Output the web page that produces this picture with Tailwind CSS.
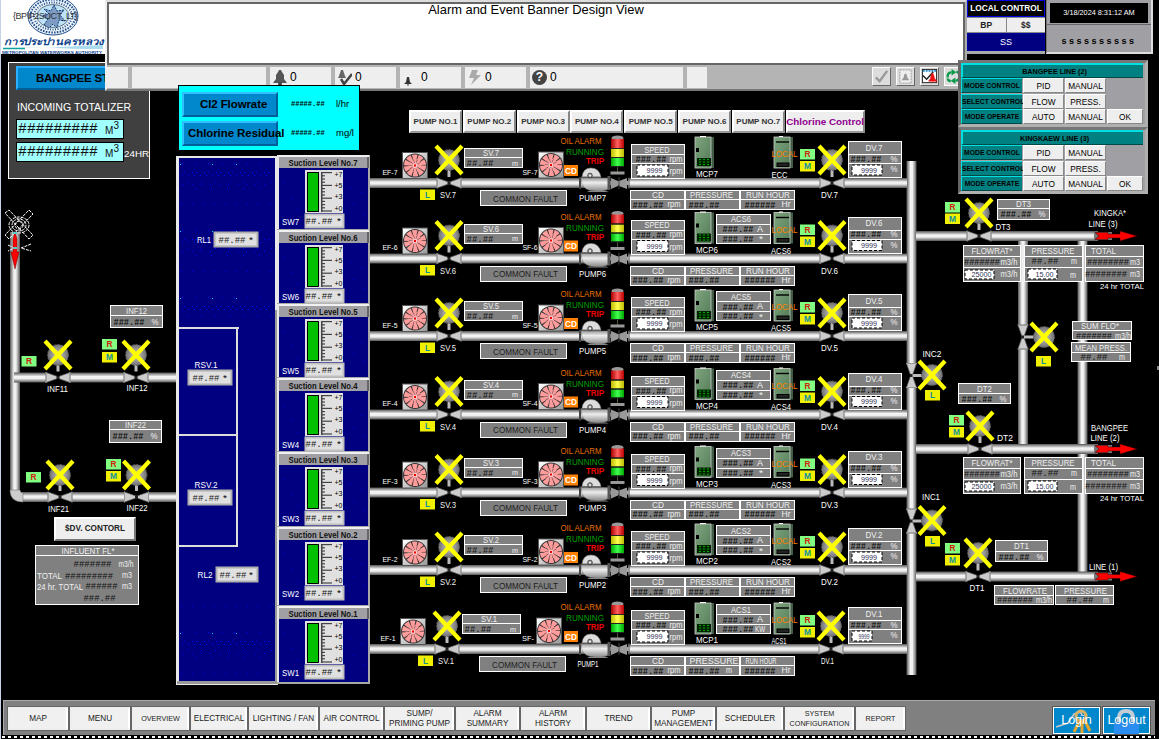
<!DOCTYPE html>
<html lang="en">
<head>
<meta charset="utf-8">
<title>Alarm and Event Banner Design View</title>
<script src="https://cdn.jsdelivr.net/npm/@tailwindcss/browser@4"></script>
</head>
<body class="relative w-[1159px] h-[739px] overflow-hidden bg-black font-['Liberation_Sans',sans-serif]">

<!-- Process diagram -->
<svg id="plant" class="absolute inset-0" width="1159" height="739" viewBox="0 0 1159 739">
  <defs>
    <linearGradient id="ph" x1="0" y1="0" x2="0" y2="1"><stop offset="0" stop-color="#555"/><stop offset=".4" stop-color="#f4f4f4"/><stop offset=".6" stop-color="#eee"/><stop offset="1" stop-color="#555"/></linearGradient>
    <linearGradient id="pv" x1="0" y1="0" x2="1" y2="0"><stop offset="0" stop-color="#555"/><stop offset=".4" stop-color="#f4f4f4"/><stop offset=".6" stop-color="#eee"/><stop offset="1" stop-color="#555"/></linearGradient>
    <linearGradient id="fanbg" x1="0" y1="0" x2="1" y2="1"><stop offset="0" stop-color="#fff"/><stop offset="1" stop-color="#999"/></linearGradient>
    <linearGradient id="cab" x1="0" y1="0" x2="1" y2="1"><stop offset="0" stop-color="#7fa57f"/><stop offset="1" stop-color="#517b55"/></linearGradient>
    <linearGradient id="pumpbody" x1="0" y1="0" x2="0" y2="1"><stop offset="0" stop-color="#999"/><stop offset=".35" stop-color="#eee"/><stop offset="1" stop-color="#888"/></linearGradient>
    <radialGradient id="mot"><stop offset="0" stop-color="#ccc"/><stop offset="1" stop-color="#707070"/></radialGradient>
    <linearGradient id="lr"><stop offset="0" stop-color="#a00"/><stop offset=".5" stop-color="#ff6060"/><stop offset="1" stop-color="#b00"/></linearGradient>
    <linearGradient id="ly"><stop offset="0" stop-color="#bb0"/><stop offset=".5" stop-color="#ffff50"/><stop offset="1" stop-color="#bb0"/></linearGradient>
    <linearGradient id="lg"><stop offset="0" stop-color="#0a0"/><stop offset=".5" stop-color="#40ff50"/><stop offset="1" stop-color="#0a0"/></linearGradient>
    <pattern id="water" width="97" height="67" patternUnits="userSpaceOnUse" x="179" y="160">
      <g fill="none" stroke="#0000ff">
        <path d="M3 3.500h90" stroke-dasharray="1 12"/><path d="M5 12.500h90" stroke-dasharray="1 7 1 3"/><path d="M3 15.500h90" stroke-dasharray="1 5"/>
        <path d="M8 21.500h88" stroke-dasharray="1 13"/><path d="M4 24.500h88" stroke-dasharray="1 8"/><path d="M16 28.500h80" stroke-dasharray="1 15"/><path d="M2 44.500h92" stroke-dasharray="1 10"/>
      </g>
      <g fill="#00e0f0"><path d="M1 4h1v1h-1zM33 4h1v1h-1zM57 4h1v1h-1z"/></g>
    </pattern>
    <g id="xvalve">
      <rect x="-8" y="-9" width="17" height="18" rx="3" fill="#777"/><circle r="10.5" fill="url(#mot)" stroke="#555" stroke-dasharray="2 1.5"/>
      <path d="M-13-14L13 14M13-14L-13 14" stroke="#ff0" stroke-width="4.2"/>
    </g>
    <g id="tie">
      <rect x="-12" y="-6" width="24" height="12" fill="#000"/>
      <path d="M-12-5L0-.8V.8L-12 5zM12-5L0-.8V.8L12 5z" fill="#ccc" stroke="#666" stroke-width=".7"/>
      <path d="M-12-5.500v11M12-5.500v11" stroke="#999"/><rect x="-1.500" y="-1.500" width="3" height="3" fill="#222"/>
    </g>
    <g id="fan">
      <rect width="26" height="27" fill="#555"/><rect x="1" y="1" width="24" height="25" fill="url(#fanbg)"/>
      <circle cx="13" cy="13.500" r="12" fill="#333"/>
      <g fill="none" stroke="#ff9c9c"><circle cx="13" cy="13.500" r="8.600" stroke-width="5" stroke-dasharray="4.500 .9"/><circle cx="13" cy="13.500" r="4.500" stroke-width="4.200" stroke-dasharray="2.400 .43"/></g>
      <circle cx="13" cy="13.500" r="2.600" fill="#ffc4c4"/><rect x="12" y="12.500" width="2" height="2" fill="#e00"/>
    </g>
    <g id="lamp">
      <ellipse cx="6.500" cy="2" rx="6" ry="2.500" fill="#999"/>
      <rect y="3" width="13" height="9" fill="url(#lr)"/><rect y="13" width="13" height="8" fill="url(#ly)"/><rect y="22" width="13" height="8" fill="url(#lg)"/>
      <path d="M0 12.500h13M0 21.500h13M0 30.500h13" stroke="#222"/><path d="M6.500 31v5" stroke="#553"/><rect x="-.5" y="35.500" width="14" height="3" fill="#999"/>
    </g>
    <g id="pump">
      <path d="M-1 9v12" stroke="#444" stroke-width="2"/>
      <path d="M0 10H20L28 10V21Q22 24 14 23Q4 23 1 16z" fill="url(#pumpbody)" stroke="#777" stroke-width=".5"/>
      <path d="M1 9Q2 0 10 0Q18 0 20 9z" fill="#ddd" stroke="#888" stroke-width=".6"/><path d="M0 9.200h20" stroke="#666"/><circle cx="9" cy="7.500" r="2.300" fill="#999" stroke="#333" stroke-width=".8"/><circle cx="9" cy="7.500" r=".9" fill="#fff"/>
      <path d="M8 23h17l3 1H6z" fill="#888"/>
      <path d="M26.500 8h3v14h-3z" fill="#555"/><path d="M30 10l7 3v5l-7 3zM46 10l-8 3v5l8 3z" fill="#999"/><path d="M38 9v12M48 9v12" stroke="#444"/>
    </g>
    <g id="cabA">
      <rect y="1" width="19" height="31" fill="#425c46"/><rect x="0" y="1" width="16" height="31" fill="url(#cab)" stroke="#ccc" stroke-width=".8"/><path d="M5 .5h6" stroke="#fff"/>
      <rect x="1" y="12" width="3" height="4"/><rect x="2" y="22" width="14" height="8" fill="#020"/><path d="M4 23.500h10M4 26h10M4 28.500h10" stroke="#0a0" stroke-dasharray="2 2"/>
    </g>
    <g id="cabB">
      <rect y="1" width="19" height="31" fill="#425c46"/><rect x="0" y="1" width="16" height="31" fill="url(#cab)" stroke="#ccc" stroke-width=".8"/>
      <path d="M5 .5h4" stroke="#fff"/><path d="M2 6h13" stroke="#000" stroke-width="1.400"/><rect x="3" y="27" width="12" height="3.500" fill="#222" stroke="#000"/>
    </g>
    <g id="arrow"><path d="M-18-4H0V4h-18z" fill="#777"/><path d="M-17-3.500H-4V-2H8V-5L25 0 8 5V2H-4V3.500h-13l4-3.500z" fill="red" stroke="#300" stroke-width=".5"/></g>
  </defs>
</svg>

<!-- Station totalizer -->
<section class="absolute left-[8px] top-[62px] w-[142px] h-[117px] border border-white bg-[#404040] text-white">
  <div class="ml-[7px] mt-[3px] w-[120px] h-[24px] border-2 border-t-[#2ab0ff] border-l-[#2ab0ff] border-b-[#005f99] border-r-[#005f99] bg-[#0087cc] pl-[18px] text-[11.500px]/[21px] font-bold text-black whitespace-nowrap tracking-[-0.200px]">BANGPEE STA</div>
  <div class="ml-[8px] mt-[10px] text-[10.600px]/[15px] whitespace-nowrap"><span>INCOMING TOTALIZER</span></div>
  <div class="ml-[7px] mt-[4px] flex w-[108px] h-[20px] justify-between border border-black bg-[#a0ffff] px-px text-[#111]"><b class="font-['Liberation_Mono'] text-[14.800px]/[19px] font-normal">#########</b><span class="pr-[3px] text-[10px]/[22px]">M<sup class="text-[10px]">3</sup></span></div>
  <div class="ml-[7px] mt-[3px] flex w-[140px] h-[20px]"><div class="flex w-[108px] shrink-0 justify-between border border-black bg-[#a0ffff] px-px text-[#111]"><b class="font-['Liberation_Mono'] text-[14.800px]/[19px] font-normal">#########</b><span class="pr-[3px] text-[10px]/[22px]">M<sup class="text-[10px]">3</sup></span></div><span class="text-[9.800px]/[24px]">24HR</span></div>
</section>

<!-- Waterworks logo -->
<div class="absolute left-0 top-0 w-[105px] h-[54px] bg-white border-l border-[#c6d4e8]">
  <svg width="104" height="54" viewBox="0 0 104 54">
    <ellipse cx="52" cy="16" rx="25" ry="19" fill="#e8f3fa" stroke="#234c88" stroke-width="1"/>
    <ellipse cx="52" cy="16" rx="22.500" ry="16.500" fill="none" stroke="#234c88" stroke-width="2" stroke-dasharray="1.500 1.300"/>
    <ellipse cx="52" cy="16" rx="19" ry="13.500" fill="none" stroke="#234c88" stroke-width="2" stroke-dasharray="1 1.500"/>
    <ellipse cx="52" cy="16" rx="16" ry="11.500" fill="#bfe3f6" stroke="#456" stroke-width=".8"/>
    <path d="M43 25l4-6-6-3 7-2-5-5 7 2 3-6 3 6 7-1-4 5 5 6-6-1-2 8-4-4-4 4z" fill="#7e9cc4" stroke="#123c77" stroke-width="1" stroke-dasharray="2 1"/>
    <text x="12" y="19" font-size="9" fill="#333" textLength="65">{BP\P2SUCT_LT}</text>
    <text x="3" y="44.500" font-size="10" font-weight="bold" font-style="italic" fill="#10448c" textLength="100" lengthAdjust="spacingAndGlyphs">การประปานครหลวง</text>
    <path d="M2 48h34l66-3v4q-34 0-52-1.500z" fill="#a9dcee"/><path d="M2 48.500h22" stroke="#10a0a0" stroke-width="1.500"/>
    <text x="1" y="53.500" font-size="4" font-weight="bold" fill="#10448c" textLength="100" lengthAdjust="spacingAndGlyphs">METROPOLITAN WATERWORKS AUTHORITY</text>
  </svg>
</div>

<!-- Alarm banner -->
<section class="absolute left-[105px] top-0 flex flex-col w-[862px] h-[91px] border-2 border-[#777] border-l-[#eee] border-r-[#aaa] border-t-[#ddd] bg-[#b4b4b4]">
  <div class="h-[63px] border-2 border-[#666] bg-white text-center text-[12.900px]/[12px] text-black"><span>Alarm and Event Banner Design View</span></div>
  <div class="mt-[2px] flex h-[21px] gap-[4px] text-[12px]/[21px] text-black">
    <div class="w-[21px] bg-[#eee]"></div><div class="w-[134px] bg-[#eee]"></div>
    <div class="flex w-[61px] items-center gap-[3px] bg-[#eee] pl-[3px]"><svg width="14" height="16" viewBox="0 0 14 16"><path d="M6 0h2l1 2 2 3v4l3 4H0l3-4V5l2-3z" fill="#555"/><circle cx="7" cy="14" r="2" fill="#444"/></svg>0</div>
    <div class="flex w-[61px] items-center gap-[3px] bg-[#eee] pl-[3px]"><svg width="14" height="16" viewBox="0 0 14 16"><path d="M3 0h2l2 6 1 2H0l1-2z" fill="#666"/><path d="M3 9l3 5 8-10" fill="none" stroke="#444" stroke-width="2.500"/></svg>0</div>
    <div class="flex w-[61px] items-center gap-[9px] bg-[#eee] pl-[4px]"><svg width="8" height="16" viewBox="0 0 8 16"><path d="M3 7h2l1 5 2 2H0l2-2z" fill="#333"/><path d="M3 15h2" stroke="#333"/></svg>0</div>
    <div class="flex w-[61px] items-center gap-[4px] bg-[#eee] pl-[4px]"><svg width="12" height="15" viewBox="0 0 12 15"><path d="M3 0h6L7 5h5L2 15l3-7H0z" fill="#aaa"/></svg>0</div>
    <div class="flex w-[153px] items-center gap-[3px] bg-[#eee] pl-[2px]"><span class="grid size-[15px] place-items-center rounded-full bg-[#444] text-[12px]/[15px] font-bold text-white">?</span>0</div>
    <div class="w-[20px] bg-[#eee]"></div>
    <div class="ml-[161px] flex gap-[5px]">
      <div class="size-[19px] border border-white border-r-[#666] border-b-[#666] bg-[#ddd]"><svg viewBox="0 0 18 18"><path d="M3 10l4 4 8-11" fill="none" stroke="#999" stroke-width="2.500"/></svg></div>
      <div class="size-[19px] border border-white border-r-[#666] border-b-[#666] bg-[#ddd]"><svg viewBox="0 0 18 18"><rect x="3" y="2" width="12" height="14" fill="#eee" stroke="#999" stroke-dasharray="2 1"/><path d="M8 6h2l1 4 2 3H5l2-3z" fill="#999"/></svg></div>
      <div class="size-[19px] border border-white border-r-[#666] border-b-[#666] bg-[#ddd]"><svg viewBox="0 0 18 18"><rect x="1.500" y="1.500" width="15" height="14" fill="#fff" stroke="#222"/><path d="M2 3h14" stroke="#28c" stroke-width="2" stroke-dasharray="2 1"/><path d="M2 8l4 4 7-8" fill="none" stroke="#222" stroke-width="1.500"/><path d="M11 6h2l1.500 5 2.500 3H8l2-3zM11 15h3" fill="#e11" stroke="#e11" stroke-width=".5"/></svg></div>
      <div class="size-[19px] border border-white bg-[#ddd]"><svg viewBox="0 0 18 18"><path d="M3 10Q2 5 7 4.500M15 8q1 5-4 5.500M12 4q3 .5 3 3M6 14q-3-.5-3-3" fill="none" stroke="#0a9a4a" stroke-width="2.500"/><path d="M7 1l5 3.500-5 3.500zM11 10v7l-5-3.500z" fill="#0a9a4a"/></svg></div>
    </div>
  </div>
</section>

<!-- Chlorine block -->
<section class="absolute left-[178px] top-[85px] flex w-[182px] h-[66px] flex-col gap-[4px] border border-black bg-[#0ff] px-[3px] pt-[6px] text-[11.500px] text-black">
  <div class="flex h-[25px] items-center"><div class="w-[96px] h-[25px] shrink-0 border-2 border-t-[#30c0ff] border-l-[#30c0ff] border-b-[#005f99] border-r-[#005f99] bg-[#0087cc] pl-[16px] leading-[21px] font-bold whitespace-nowrap tracking-[-0.100px]">Cl2 Flowrate</div><span class="ml-[13px] w-[45px] font-['Liberation_Mono'] text-[7px] font-bold">#####.##</span><span class="text-[9.500px]">l/hr</span></div>
  <div class="flex h-[25px] items-center"><div class="w-[96px] h-[25px] shrink-0 border-2 border-t-[#30c0ff] border-l-[#30c0ff] border-b-[#005f99] border-r-[#005f99] bg-[#0087cc] pl-[4px] leading-[21px] font-bold whitespace-nowrap tracking-[-0.080px]">Chlorine Residual</div><span class="ml-[13px] w-[45px] font-['Liberation_Mono'] text-[7px] font-bold">#####.##</span><span class="text-[9.500px]">mg/l</span></div>
</section>

<!-- Pump tabs -->
<nav class="absolute left-[409px] top-[110px] flex h-[23px] w-[456px] text-[8px] font-bold text-[#333]" id="tabs"></nav>

<!-- Local control -->
<section class="absolute left-[967px] top-0 flex h-[54px] w-[78px] flex-col bg-[#888] text-center font-bold">
  <div class="h-[17px] border border-[#0000e0] bg-black text-[8.300px]/[15px] text-white whitespace-nowrap">LOCAL CONTROL</div>
  <div class="flex h-[16px] gap-px py-px text-[8.500px]/[14px] text-[#222]"><div class="flex-1 bg-[#eee]">BP</div><div class="flex-1 bg-[#eee]">$$</div></div>
  <div class="h-[18px] border border-[#0000a0] bg-[#000080] text-[9px]/[17px] font-normal text-white">SS</div>
  <div class="flex-1 bg-[#aaa]"></div>
</section>
<section class="absolute left-[1046px] top-0 flex h-[54px] w-[107px] flex-col border-r-2 border-b-2 border-r-[#ddd] border-b-[#ddd] border-l border-l-[#777] bg-[#a0a0a4] text-center">
  <div class="mx-[3px] mt-[3px] h-[20px] bg-black text-[7.300px]/[20px] text-white whitespace-nowrap">3/18/2024 8:31:12 AM</div>
  <div class="mt-px h-[2px] border-t border-[#666] bg-[#ccc]"></div>
  <div class="flex-1 pt-[1px] text-[9px]/[30px] font-bold tracking-[2.500px] text-black whitespace-nowrap">ssssssssss</div>
</section>

<!-- Line controllers -->
<section id="lines" class="absolute left-[958px] top-[60px] w-[190px] text-black"></section>

<!-- SDV button -->
<button class="absolute left-[54px] top-[517px] h-[24px] w-[82px] border-2 border-t-white border-l-white border-r-[#777] border-b-[#777] bg-[#eee] text-[8.200px] text-[#222] font-bold whitespace-nowrap">$DV. CONTORL</button>

<!-- Navigation -->
<nav class="absolute left-[3px] top-[700px] flex h-[35px] w-[1152px] justify-between border-t border-l border-[#aaa] bg-[#808080] pl-[4px] pr-[5px] pt-[6px]">
  <div id="nav" class="flex h-[23px] gap-[2px] text-center text-[8.200px]/[10px] text-[#222]"></div>
  <div class="flex h-[27px] gap-[3px] text-white text-[12.500px]">
    <div class="relative grid w-[47px] place-items-center border border-white outline outline-[#555] bg-[#0087cc]"><svg class="absolute inset-0" width="45" height="26" viewBox="0 0 45 26"><path d="M2 19l12-4 6-9q8-4 8 2" fill="none" stroke="#ccc" stroke-width="1.500"/><circle cx="27" cy="8" r="5" fill="none" stroke="#ddb260" stroke-width="3"/><path d="M26 12l-6 12M30 11l6 12M28 12v13" stroke="#e0a530" stroke-width="3"/></svg><span class="relative">Login</span></div>
    <div class="relative grid w-[47px] place-items-center border border-white outline outline-[#555] bg-[#0087cc]"><svg class="absolute inset-0" width="45" height="26" viewBox="0 0 45 26"><path d="M15 14V10q0-7 7-7t7 7v4" fill="none" stroke="#c4ccd4" stroke-width="4"/><rect x="10" y="14" width="25" height="12" fill="#2b8df0"/></svg><span class="relative">Logout</span></div>
  </div>
</nav>
<div class="absolute left-0 top-0 h-[739px] w-px bg-[#c6d4e8]"></div>
<div class="absolute left-[2px] top-[736px] h-[2px] w-[1153px] bg-[repeating-linear-gradient(90deg,#fff_0_3px,#000_3px_6px)]"></div>
<div class="absolute left-[1157px] top-[366px] h-[4px] w-[2px] bg-[#888]"></div>

<script>
const out = [];
const add = s => out.push(s);
const rect = (x, y, w, h, cls) => add(`<rect x="${x}" y="${y}" width="${w}" height="${h}" class="${cls}"/>`);
// Text centred on (x, y), fitted to width w
const txt = (x, y, s, w, size, cls) => add(`<text x="${x - w / 2}" y="${y + size * .36}" font-size="${size}" textLength="${w}" lengthAdjust="spacingAndGlyphs" class="${cls}">${s}</text>`);
const hash = (x, y, s, w, cls) => txt(x, y, s, w, 9, cls || "font-bold font-['Liberation_Mono'] fill-[#101010]");
const white = 'fill-white', soft = 'fill-[#f0f0f0]';
const use = (id, x, y, t) => add(`<use href="#${id}" transform="translate(${x} ${y}) ${t || ''}"/>`);
const pipeH = (x1, x2, y) => add(`<rect x="${x1}" y="${y - 5}" width="${x2 - x1}" height="10" fill="url(#ph)"/>`);
const pipeV = (x, y1, y2) => add(`<rect x="${x - 5}" y="${y1}" width="10" height="${y2 - y1}" fill="url(#pv)"/>`);
// Grey framed table with horizontal rules
const table = (x, y, w, h, rules) => { y = Math.round(y); rect(x + .5, y + .5, w - 1, h - 1, 'fill-[#808080] stroke-white'); rules.forEach(r => rect(x, Math.round(r), w, 1, 'fill-white')); };
const field = (x, y, w, h, s, tw) => { rect(x, y, w, h, 'fill-white'); rect(x, y, w, h, 'fill-none stroke-black [stroke-dasharray:3_2]'); txt(x + w / 2 + 2, y + h / 2, s, tw, 8, 'fill-[#335]'); };
const tag = (x, y, s) => {
  if (s === 'R') rect(x, y, 15, 10.500, 'fill-[#80ff80]'); else rect(x, y, 15, 10.500, 'fill-[#f0f000]');
  if (s === 'R') txt(x + 7.5, y + 5.3, s, 6, 8.5, 'font-bold fill-[#d02010]'); else txt(x + 7.5, y + 5.3, s, s === 'M' ? 7 : 5, 8.5, 'font-bold fill-[#1090a0]');
};
const valve = (x, pipeY, headY) => { rect(x - 1.5, headY + 10, 3, pipeY - headY - 10, 'fill-[#bbb]'); use('tie', x, pipeY); use('xvalve', x, headY); };
const pct = (x, y, w, h, name, split) => { table(x, y, w, h, [split]); txt(x + w / 2, (y + split) / 2 + .5, name, name === 'INF12' || name === 'INF22' ? 21 : 15, 8.5, soft); hash(x + 19, (split + y + h) / 2, '###.##', 31); txt(x + w - 8, (split + y + h) / 2, '%', 7, 9, soft); };

// Water tank
rect(176, 156, 102, 529, 'fill-[#e8e8e8]'); rect(177, 681, 101, 3, 'fill-[#999]');
rect(179, 158, 96, 523, 'fill-[#000080]');
add('<rect x="179" y="158" width="96" height="160" fill="url(#water)"/><rect x="179" y="596" width="96" height="85" fill="url(#water)"/>');
rect(275, 310, 2, 372, 'fill-[#999]');
rect(179, 327, 60, 2, 'fill-[#ddd]'); rect(236, 329, 2, 217, 'fill-[#ddd]'); rect(179, 434, 59, 2, 'fill-[#ddd]'); rect(179, 545, 59, 2, 'fill-[#ddd]');
const tankBox = (x, y, w) => { rect(x + .5, y + .5, w - 1, 14, 'fill-[#e0e0e0] stroke-[#b0b0b0] [stroke-width:2]'); hash(x + w / 2 - 4, y + 8, '##.##', 27, "font-['Liberation_Mono'] fill-[#222]"); txt(x + w - 7, y + 8, '*', 4, 9, 'fill-black'); };
txt(204, 240, 'RL1', 14, 9, white); tankBox(214, 232, 44);
txt(206, 365, 'RSV.1', 23, 9, white); tankBox(188, 370, 44);
txt(206, 485, 'RSV.2', 23, 9, white); tankBox(188, 490, 44);
txt(205, 575, 'RL2', 15, 9, white); tankBox(216, 567, 42);

// Suction levels
rect(277, 155, 93, 529, 'fill-[#a8a8a8]');
[[7, 162], [6, 237], [5, 311], [4, 385], [3, 459], [2, 534], [1, 613]].forEach(([n, y], i, all) => {
  const end = i < 6 ? all[i + 1][1] - 8 : 682;
  rect(278, y - 7, 91, 2, 'fill-[#f0f0f0]'); rect(279, y - 5, 90, 11, 'fill-[#a0a0a4]'); rect(367, y - 5, 2, 11, 'fill-[#666]');
  rect(279, y + 6, 89, end - y - 6, 'fill-[#000080]'); rect(277, y - 7, 2, end - y + 7, 'fill-[#e8e8e8]');
  txt(323, y + .3, 'Suction Level No.' + n, 69, 9, 'font-bold fill-[#111]');
  [[283, 20], [291, 35], [298, 47], [350, 25], [354, 42], [361, 30], [364, 51]].forEach(p => rect(p[0], y + p[1], 1, 1, 'fill-[#0000e8]'));
  rect(305, y + 8, 38, 43, 'fill-[#e0e0e0]'); rect(307.5, y + 10.5, 11, 39, 'fill-[#00c000] stroke-black');
  rect(321, y + 10, 1.5, 40, 'fill-[#444]');
  for (let k = 0; k <= 12; k++) rect(321, y + 10 + k * 3.2, k % 4 === 0 ? 11 : 4, 1.2, 'fill-[#444]');
  ['+7', '+5', '+3', '+0'].forEach((t, k) => txt(338.500, y + 12.500 + k * 11.2, t, 8, 7, 'fill-black'));
  rect(305.5, y + 52.5, 38, 13, 'fill-[#e0e0e0] stroke-[#c0c0c0] [stroke-width:2]');
  hash(319, y + 59, '##.##', 27, "font-['Liberation_Mono'] fill-[#111]"); txt(339, y + 59, '*', 4, 9, 'fill-black');
  txt(290.500, y + 60, 'SW' + n, 17, 9, white);
});

// Common headers and intake line
pipeV(15, 232, 492); pipeH(14, 176, 377.5); pipeH(20, 176, 497);
add('<path d="M10 490h10q0 3 3 3v9q-13 0-13-12z" fill="#ccc" stroke="#777" stroke-width=".6"/>');
pipeV(911.5, 161, 675); pipeV(1023, 240, 445); pipeV(1082.5, 240, 574);

// Pump trains
[[7, 183, 0], [6, 258.5, 0], [5, 336, 0], [4, 414.5, 0], [3, 492.5, 0], [2, 570, 0], [1, 649, -2]].forEach(([n, y, d]) => {
  pipeH(370, 907, y);
  use('fan', 402 + d, y - 31); use('fan', 538 + d, y - 31.5);
  txt(390 + d, y - 11, 'EF-' + n, 15, 7.5, white); txt(530 + d, y - 11, n === 1 ? 'SF-' : 'SF-' + n, n === 1 ? 12 : 15, 7.5, white);
  valve(449 + d, y, y - 23); tag(420 + d, y + 6.5, 'L'); txt(448 + d, y + 12, 'SV.' + n, 16, 8.5, soft);
  table(464 + d, y - 35, 59, 20, [y - 26]); txt(491 + d, y - 30, 'SV.' + n, 16, 8.5, soft); hash(480 + d, y - 20, '##.##', 27, "font-bold font-['Liberation_Mono'] fill-[#222]"); txt(515 + d, y - 20, 'm', 6, 8, soft);
  rect(480.5 + d / 2, Math.round(y) + 7.5, 86, 15, 'fill-[#808080] stroke-white'); txt(525.500 + d / 2, y + 15.2, 'COMMON FAULT', 65, 9.5, 'fill-[#202020]');
  rect(564, y - 18, 14, 11, 'fill-[#ff8000]'); txt(571, y - 12.5, 'CD', 12, 9, 'font-bold fill-white');
  txt(581, y - 42, 'OIL ALARM', 41, 9, 'fill-[#e87000]'); txt(585, y - 31, 'RUNNING', 38, 9, 'fill-[#00a000]'); txt(595, y - 22, 'TRIP', 18, 9, 'font-bold fill-[#f00000]');
  use('lamp', 611, y - 47); rect(604, y - 6, 24, 12, 'fill-black'); rect(604, y - 2, 24, 4, 'fill-[#aaa]'); use('pump', 581, y - 15);
  txt(n === 1 ? 588 : 592.5, y + 15, 'PUMP' + n, n === 1 ? 21 : 27, 9, white);
  // Speed
  table(631, y - 39, 54, 35, [y - 29, y - 20]); txt(657, y - 33.500, 'SPEED', 25, 8.5, soft); hash(651, y - 24, '###.##', 31); txt(676, y - 24.500, 'rpm', 13, 8.5, soft);
  field(637, y - 18, 31, 11, '9999', 16); txt(676, y - 12, 'rpm', 13, 8.5, soft);
  // CD, pressure, run hour
  table(630, y + 7, 55, 20, [y + 16]); table(685, y + 7, 55, 20, [y + 16]); table(740, y + 7, 55, 20, [y + 16]);
  txt(658, y + 12, 'CD', 12, 8.5, soft); txt(n === 1 ? 714 : 711.5, y + 12, 'PRESSURE', n === 1 ? 49 : 43, n === 1 ? 9.5 : 8.5, soft); txt(n === 1 ? 761 : 768, y + 12, 'RUN HOUR', n === 1 ? 31 : 44, 8.5, soft);
  hash(648, y + 21.5, '###.##', 31); txt(674, y + 21, 'rpm', 13, 8.5, soft); hash(704, y + 21.5, '###.##', 31); if (n === 1) txt(729, y + 21, 'm', 6, 8.5, soft);
  hash(760, y + 21.5, '######', 31); txt(786, y + 21, 'Hr', 9, 8.5, soft);
  // Cabinets
  use('cabA', 695, y - 47); use('cabB', 774, y - 47); txt(707, y - 9, 'MCP' + n, 22, 9, white);
  txt(n === 1 ? 779 : n === 7 ? 779.5 : 781, y - 8, n === 7 ? 'ECC' : 'ACS' + n, n === 7 ? 16 : n === 1 ? 15 : 20, 9, white);
  if (n < 7) {
    table(716, y - 45, 55, 30, [y - 35, y - 25]); txt(741, y - 39.5, 'ACS' + n, 20, 8.5, soft);
    hash(738, y - 29.5, '###.##', 31); hash(738, y - 20, '###.##', 31); txt(760, y - 30, 'A', 6, 8.5, soft); n === 1 ? txt(760, y - 20, 'KW', 10, 8.5, soft) : txt(761, y - 19.5, '*', 4, 9, soft);
  }
  txt(784.5, y - 29, 'LOCAL', 26, 8.5, 'fill-[#ff8000]');
  tag(800, y - 34, 'R'); tag(800, y - 22, 'M'); valve(832 + d / 2, y, y - 23); txt(829.500 - (n === 1 ? 2 : 0), y + 12, 'DV.' + n, n === 1 ? 13 : 17, 8.5, white);
  table(848, y - 42, 54, 37, [y - 29, y - 20]); txt(874, y - 35.5, 'DV.' + n, 17, 9, soft); hash(866, y - 24.5, '###.##', 31); txt(894, y - 24.500, '%', 7, 9, soft);
  field(852, y - 18, n === 1 ? 20 : 30, 10, '9999', n === 1 ? 11 : 16); txt(894, y - 14, '%', 7, 9, soft);
});

// Delivery lines
const delivery = (y, vx, hy) => { pipeH(916, 1098, y); use('arrow', 1112, y); valve(vx, y, hy); };
delivery(236, 979, 213); delivery(449, 980, 426); delivery(576.5, 978, 553);
tag(945, 202, 'R'); tag(945, 213.5, 'M'); pct(997, 199, 53, 21, 'DT3', 208); txt(1003, 227, 'DT3', 15, 8.5, white);
tag(949, 415, 'R'); tag(949, 427, 'M'); pct(958, 383, 53, 21, 'DT2', 393); txt(1005, 438, 'DT2', 16, 8.5, white);
tag(945, 543, 'R'); tag(945, 555, 'M'); pct(995, 540, 53, 22, 'DT1', 551); txt(977, 588, 'DT1', 15, 8.5, white);
txt(1110, 213, 'KINGKA*', 32, 8.5, white); txt(1103, 223.500, 'LINE (3)', 29, 8.5, white);
txt(1109.500, 428, 'BANGPEE', 37, 8.5, white); txt(1105, 437.500, 'LINE (2)', 29, 8.5, white); txt(1103.500, 566.5, 'LINE (1)', 29, 8.5, white);
[245, 457].forEach(y => {
  table(963, y, 58, 37, [y + 11, y + 22]); table(1024, y, 59, 37, [y + 11, y + 22]); table(1085, y, 59, 37, [y + 11, y + 22]);
  txt(992, y + 6, 'FLOWRAT*', 41, 8.5, soft); txt(1053, y + 5.5, 'PRESSURE', 43, 8.5, soft); txt(1103.5, y + 6, 'TOTAL', 25, 8.5, soft);
  const dark = "font-['Liberation_Mono'] fill-[#111]";
  hash(982, y + 17, '#######', 36, dark); txt(1009, y + 17, 'm3/h', 17, 8.5, soft); hash(1045, y + 16, '##.##', 27, dark); txt(1074, y + 16, 'm', 6, 8.5, soft);
  hash(1108, y + 17, '########', 42, dark); txt(1135, y + 17, 'm3', 10, 8.5, soft); hash(1106, y + 29, '########', 42, dark); txt(1135, y + 29, 'm3', 10, 8.5, soft);
  field(965, y + 25, 29, 9, '25000', 20); txt(1009, y + 29, 'm3/h', 17, 8.5, soft); field(1028, y + 24, 29, 10, '15.00', 18); txt(1073, y + 30, 'm', 6, 8.5, soft);
  txt(1122, y + 41.5, '24 hr TOTAL', 44, 8, white);
});
const m7 = "font-['Liberation_Mono'] fill-[#111]";
table(1072, 321, 60, 19, [330]); txt(1100, 326, 'SUM FLO*', 38, 8.5, soft); hash(1094, 335.5, '#######', 36, m7); txt(1123, 335.5, 'm3/h', 16, 8.5, soft);
table(1071, 342, 60, 20, [352]); txt(1101, 347.5, 'MEAN PRESS.', 52, 8.5, soft); hash(1094, 357, '##.##', 27, m7); txt(1122, 357, 'm', 6, 8.5, soft);
table(994, 585, 60, 20, [595]); txt(1025, 590.5, 'FLOWRATE', 44, 8.5, soft); hash(1015, 600, '#######', 36, m7); txt(1044, 600, 'm3/h', 16, 8.5, soft);
table(1055, 585, 59, 20, [595]); txt(1085.500, 590.5, 'PRESSURE', 43, 8.5, soft); hash(1080, 600, '##.##', 27, m7); txt(1106, 600, 'm', 6, 8.5, soft);
[[1023, 337, 1044, 337], [911.5, 375.5, 932, 375], [911.5, 521, 932, 520.5]].forEach(([x, y, hx, hy]) => { use('tie', x, y, 'rotate(90)'); rect(x + 1, y - 1.5, hx - x - 8, 3, 'fill-[#bbb]'); use('xvalve', hx, hy); });
tag(1036, 356, 'L'); tag(925, 390, 'L'); tag(925, 536, 'L'); txt(932, 354, 'INC2', 19, 8.5, white); txt(931, 497, 'INC1', 18, 8.5, white);

// Influent side
valve(58, 377.5, 355); valve(136, 377.5, 355); valve(60, 497, 475); valve(136.5, 497, 475);
tag(21.5, 356, 'R'); tag(102, 339, 'R'); tag(102, 352, 'M'); tag(26, 472, 'R'); tag(106, 459, 'R'); tag(106, 471, 'M');
txt(57.5, 389, 'INF11', 21, 8.5, white); txt(137, 388, 'INF12', 21, 8.5, white); txt(58.5, 509, 'INF21', 21, 8.5, white); txt(137, 508, 'INF22', 21, 8.5, white);
pct(110, 305, 53, 23, 'INF12', 315); pct(109, 420, 53, 23, 'INF22', 429);
table(35, 545, 104, 60, [555]); txt(88, 550.5, 'INFLUENT FL*', 53, 8.5, soft);
hash(92.500, 564, '#######', 38, m7); txt(126, 563.500, 'm3/h', 15, 8.5, soft);
txt(49.500, 575.500, 'TOTAL', 25, 8.5, soft); hash(89, 575.500, '#########', 48, m7); txt(127, 574.500, 'm3', 10, 8.5, soft);
txt(60, 586.500, '24 hr. TOTAL', 46, 8.5, soft); hash(101.500, 585.500, '######', 32, m7); txt(127, 585.500, 'm3', 10, 8.5, soft); hash(99.500, 597.500, '###.##', 32, m7);
add(`<g fill="none" stroke="#fff" stroke-dasharray="3 1"><path d="M5 213l4-3 24 25-4 4zM29 210l4 4-24 25-4-4z"/><ellipse cx="19" cy="225" rx="10" ry="8"/><ellipse cx="19" cy="225" rx="7" ry="6"/><ellipse cx="19" cy="225" rx="4" ry="4"/><path d="M8 245l6 3-6 3M31 244l-10 4 10 3"/></g>
<path d="M15 231l2 8v13h2l-4 17-4-17h2v-13z" fill="red" stroke="#600" stroke-width=".5"/><path d="M13 233h4M13 248h4" stroke="#5cc" stroke-width="2"/>`);

document.getElementById('plant').insertAdjacentHTML('beforeend', out.join(''));

// Pump tabs
document.getElementById('tabs').innerHTML = [1, 2, 3, 4, 5, 6, 7].map(n => `<div class="w-[53px] mr-[0.800px] shrink-0 border-2 border-t-white border-l-white border-r-[#888] border-b-[#999] bg-[#eee] text-center leading-[20px] whitespace-nowrap"><span>PUMP NO.${n}</span></div>`).join('') +
  '<div class="flex w-[79px] shrink-0 justify-center border-2 border-t-white border-l-white border-r-[#888] border-b-[#999] bg-[#eee] text-[9.900px] leading-[20px] text-[#900090] whitespace-nowrap">Chlorine Control</div>';

// Line controllers
const key = 'h-[15px] border border-white border-r-[#888] border-b-[#888] bg-[#eee] text-center text-[8.300px] leading-[14px]';
const name = 'h-[15px] border-t border-l border-t-[#00e0e0] border-l-[#00e0e0] border-b border-b-[#004848] bg-[#008080] text-center text-[6.800px] leading-[13px] font-bold whitespace-nowrap';
document.getElementById('lines').innerHTML = ['BANGPEE LINE (2)', 'KINGKAEW LINE (3)'].map(t => `<div class="h-[67px] border-[3px] border-t-[#777] border-l-[#666] border-r-[#b0b0b0] border-b-[#b0b0b0] bg-[#a0a0a4]">
  <div class="w-[182px] h-[15px] border-t-2 border-l-2 border-b border-t-[#00e0e0] border-l-[#00e0e0] border-b-[#004848] bg-[#008080] pl-[3px] text-center text-[7.200px] leading-[14px] font-bold"><span>${t}</span></div>
  <div class="grid grid-cols-[61px_41px_41px_36px] gap-x-[1px] gap-y-[0.500px]">
  <div class="${name}">MODE CONTROL</div><div class="${key}">PID</div><div class="${key}">MANUAL</div><div></div>
  <div class="${name}">SELECT CONTROL</div><div class="${key}">FLOW</div><div class="${key}">PRESS.</div><div></div>
  <div class="${name}">MODE OPERATE</div><div class="${key}">AUTO</div><div class="${key}">MANUAL</div><div class="${key}">OK</div></div></div>`).join('');

// Navigation buttons: label and width
document.getElementById('nav').innerHTML = [['MAP', 60], ['MENU', 60], ['OVERVIEW', 57, 1], ['ELECTRICAL', 56], ['LIGHTING / FAN', 69], ['AIR CONTROL', 63], ['SUMP/<br>PRIMING PUMP', 69], ['ALARM<br>SUMMARY', 63], ['ALARM<br>HISTORY', 64], ['TREND', 63], ['PUMP<br>MANAGEMENT', 63], ['SCHEDULER', 66], ['SYSTEM<br>CONFIGURATION', 69, 1], ['REPORT', 49, 1]]
  .map(([t, w, s]) => `<div class="grid shrink-0 place-items-center border-2 border-[#eee] border-r-white outline outline-[#666] bg-[#f0f0f0] whitespace-nowrap ${s ? 'text-[7.200px]' : ''}" style="width:${w}px"><span>${t}</span></div>`).join('');
</script>
</body>
</html>
